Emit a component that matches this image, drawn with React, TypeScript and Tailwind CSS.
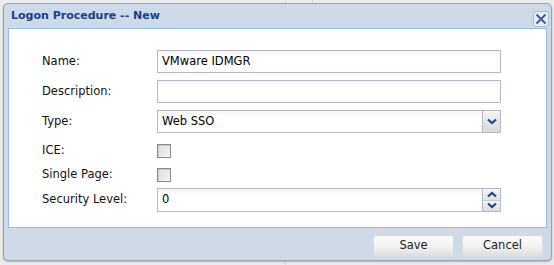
import React from "react";

const font = { fontFamily: '"DejaVu Sans", Verdana, sans-serif' };

function ChevronDown() {
  return (
    <svg width="10" height="7" viewBox="0 0 10 7">
      <path d="M1 1.5 L5 5 L9 1.5" fill="none" stroke="#1f4586" strokeWidth="2.2" />
    </svg>
  );
}
function ChevronUp() {
  return (
    <svg width="10" height="7" viewBox="0 0 10 7">
      <path d="M1 5.5 L5 2 L9 5.5" fill="none" stroke="#1f4586" strokeWidth="2.2" />
    </svg>
  );
}

function Label({ children }: { children: React.ReactNode }) {
  return <div className="w-[115px] text-[11.5px] text-[#111]">{children}</div>;
}

function TextBox({ value, trigger }: { value?: string; trigger?: React.ReactNode }) {
  return (
    <div className="w-[344px] h-[23px] border border-[#b5b8c8] bg-gradient-to-b from-[#f4f4f4] to-white to-[30%] flex items-stretch">
      <div className="flex-1 flex items-center pl-[4px] text-[11.5px] text-black">{value}</div>
      {trigger}
    </div>
  );
}

function Checkbox() {
  return (
    <div className="w-[14px] h-[14px] border border-[#8a8a8a] bg-gradient-to-br from-[#dcdcdc] to-[#f6f6f6] shadow-[inset_1px_1px_0_#c8c8c8]" />
  );
}

function Button({ label }: { label: string }) {
  return (
    <div className="w-[81px] h-[22px] rounded-[3px] border border-[#d8dce1] bg-gradient-to-b from-[#fbfbfb] via-[#f3f3f3] to-[#dedede] flex items-center justify-center text-[11.5px] text-[#222]">
      {label}
    </div>
  );
}

export default function App() {
  return (
    <div className="w-[554px] h-[265px] bg-[#ececec] relative overflow-hidden" style={font}>
      <div className="absolute left-[285px] top-0 w-px h-full bg-[#d6d6d6]" />
      <div className="absolute left-[312px] top-0 w-px h-[4px] bg-[#d6d6d6]" />
      <div className="relative pl-[3px] pt-[3px]">
        <div className="w-[549px] h-[258px] rounded-[5px] border border-[#9aa3b0] bg-[#cedae7] flex flex-col shadow-[0_1px_2px_rgba(0,0,0,0.25)]">
          <div className="h-[24px] flex items-center pl-[7px] pr-[2px] justify-between">
            <span className="text-[11px] font-bold text-[#15428b] mt-[1px]">Logon Procedure -- New</span>
            <div className="w-[16px] h-[16px] mt-[5px] rounded-[3px] border border-[#a9bdd9] bg-[#e6edf6] flex items-center justify-center">
              <svg width="12" height="12" viewBox="0 0 12 12">
                <path d="M1.5 1.5 L10.5 10.5 M10.5 1.5 L1.5 10.5" stroke="#3a5a97" strokeWidth="1.9" />
              </svg>
            </div>
          </div>
          <div className="mx-[4px] h-[200px] bg-white border border-[#99bbe8] pl-[33px] pt-[21px] flex flex-col">
            <div className="flex items-center h-[23px]">
              <Label>Name:</Label>
              <TextBox value="VMware IDMGR" />
            </div>
            <div className="flex items-center h-[23px] mt-[7px]">
              <Label>Description:</Label>
              <TextBox />
            </div>
            <div className="flex items-center h-[23px] mt-[7px]">
              <Label>Type:</Label>
              <TextBox
                value="Web SSO"
                trigger={
                  <div className="w-[18px] border-l border-[#b5b8c8] bg-gradient-to-b from-[#f5f5f5] to-[#d9d9d9] flex items-center justify-center">
                    <ChevronDown />
                  </div>
                }
              />
            </div>
            <div className="flex items-center h-[14px] mt-[11px]">
              <Label>ICE:</Label>
              <Checkbox />
            </div>
            <div className="flex items-center h-[14px] mt-[10px]">
              <Label>Single Page:</Label>
              <Checkbox />
            </div>
            <div className="flex items-center h-[24px] mt-[6px]">
              <Label>Security Level:</Label>
              <div className="w-[344px] h-[24px] border border-[#b5b8c8] bg-gradient-to-b from-[#f4f4f4] to-white to-[30%] flex items-stretch">
                <div className="flex-1 flex items-center pl-[4px] text-[11.5px] text-black">0</div>
                <div className="w-[18px] border-l border-[#b5b8c8] flex flex-col">
                  <div className="flex-1 bg-gradient-to-b from-[#f5f5f5] to-[#e2e2e2] flex items-center justify-center border-b border-[#c8ccd4]">
                    <ChevronUp />
                  </div>
                  <div className="flex-1 bg-gradient-to-b from-[#f5f5f5] to-[#dcdcdc] flex items-center justify-center">
                    <ChevronDown />
                  </div>
                </div>
              </div>
            </div>
          </div>
          <div className="flex justify-end gap-[8px] pr-[8px] pt-[7px]">
            <Button label="Save" />
            <Button label="Cancel" />
          </div>
        </div>
      </div>
    </div>
  );
}
